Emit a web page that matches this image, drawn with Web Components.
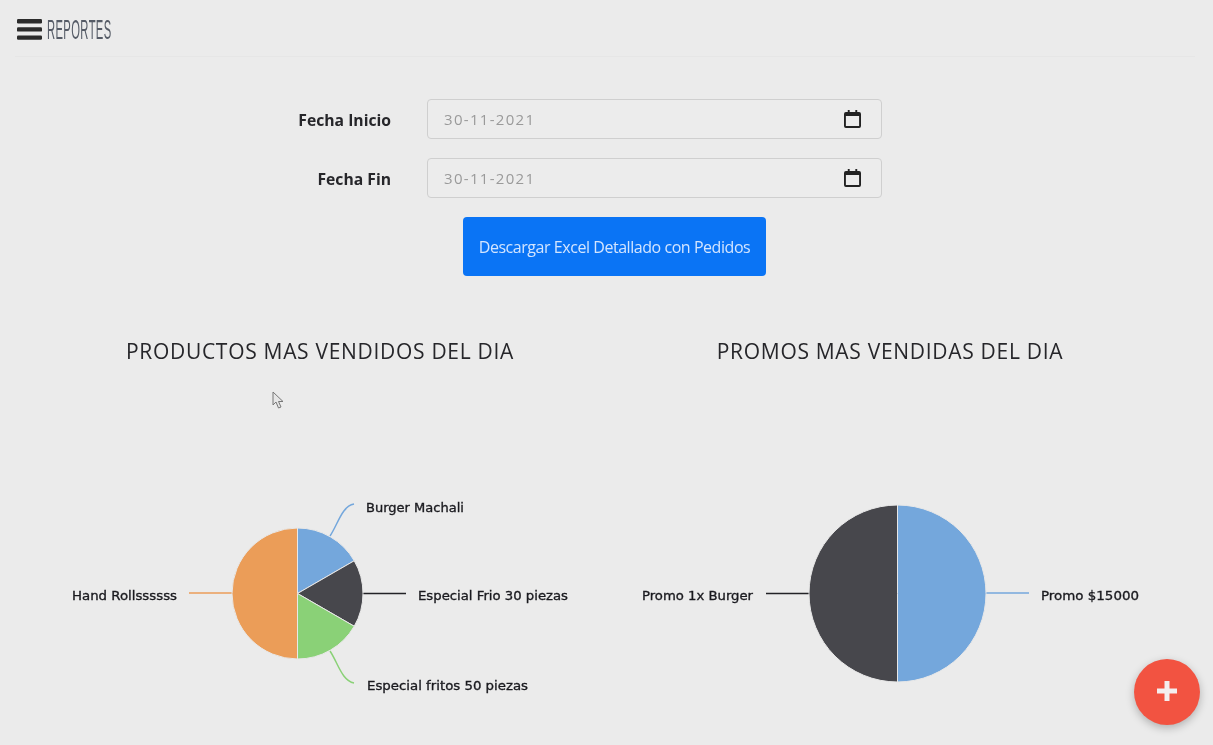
<!DOCTYPE html>
<html>
<head>
<meta charset="utf-8">
<title>Reportes</title>
<style>
  html, body { margin: 0; height: 100%; background: #ebebeb; overflow: hidden; }
  body { font-family: "Open Sans", "Liberation Sans", sans-serif; color: #212529; filter: blur(.4px); }
</style>
</head>
<body>
<app-header>Reportes</app-header>
<report-form>
  <date-field label="Fecha Inicio" value="30-11-2021"></date-field>
  <date-field label="Fecha Fin" value="30-11-2021"></date-field>
  <primary-button>Descargar Excel Detallado con Pedidos</primary-button>
</report-form>
<chart-row>
  <pie-chart title="PRODUCTOS MAS VENDIDOS DEL DIA" x="35" cx="297.5" r="65.5"
    slices='[{"c":"#74a7dc","a":60},{"c":"#47474c","a":60},{"c":"#8ad177","a":60},{"c":"#eb9d58","a":180}]'
    lines='[{"d":"M330 536C338 524 342 506 354 504","c":"#74a7dc"},{"d":"M363 593.5H406","c":"#222226"},{"d":"M330 651C338 663 342 681 354 683","c":"#8ad177"},{"d":"M189 593H232","c":"#eb9d58"}]'
    labels='[{"t":"Burger Machali","x":366,"y":512,"w":98},{"t":"Especial Frio 30 piezas","x":418,"y":600,"w":150},{"t":"Especial fritos 50 piezas","x":367,"y":690,"w":161},{"t":"Hand Rollssssss","x":72,"y":600,"w":105}]'></pie-chart>
  <pie-chart title="PROMOS MAS VENDIDAS DEL DIA" x="605" cx="897.5" r="88.5"
    slices='[{"c":"#74a7dc","a":180},{"c":"#47474c","a":180}]'
    lines='[{"d":"M986 593H1029","c":"#74a7dc"},{"d":"M766 593.5H809","c":"#222226"}]'
    labels='[{"t":"Promo $15000","x":1041,"y":600,"w":98},{"t":"Promo 1x Burger","x":642,"y":600,"w":111}]'></pie-chart>
</chart-row>
<mouse-pointer></mouse-pointer>
<fab-button></fab-button>

<script>
class AppHeader extends HTMLElement {
  constructor () {
    super()
    this.attachShadow({ mode: 'open' }).innerHTML = `
      <style>
        :host { display: block; margin: 0 18px 0 15px; height: 56px; border-bottom: 1px solid #e6e6e6; box-sizing: content-box; }
        .bar { display: flex; align-items: center; gap: 5px; height: 100%; padding: 3px 0 0 2px; box-sizing: border-box; }
        svg { display: block; width: 25px; height: 21px; flex: none; }
        .name {
          font: 400 28px "Liberation Sans", sans-serif; text-transform: uppercase; color: #555b66;
          display: inline-block; transform: scaleX(.4); transform-origin: left center; white-space: nowrap; letter-spacing: 1px;
        }
      </style>
      <div class="bar">
        <svg viewBox="0 0 25 21"><g fill="#2b2b2b"><rect width="25" height="4.4" rx="1.2"/><rect y="8.2" width="25" height="4.4" rx="1.2"/><rect y="16.4" width="25" height="4.4" rx="1.2"/></g></svg>
        <span class="name"><slot></slot></span>
      </div>`
  }
}
customElements.define('app-header', AppHeader)

class ReportForm extends HTMLElement {
  constructor () {
    super()
    this.attachShadow({ mode: 'open' }).innerHTML = `
      <style>
        :host { display: flex; flex-direction: column; gap: 19px; padding-top: 42px; }
      </style>
      <slot></slot>`
  }
}
customElements.define('report-form', ReportForm)

class DateField extends HTMLElement {
  constructor () {
    super()
    this.attachShadow({ mode: 'open' }).innerHTML = `
      <style>
        :host { display: grid; grid-template-columns: 391px 455px; column-gap: 36px; align-items: center; }
        label { text-align: right; font: 700 15.7px "Open Sans", sans-serif; color: #26262a; padding-top: 2px; }
        .box {
          display: flex; align-items: center; justify-content: space-between; height: 40px; box-sizing: border-box;
          padding: 0 20px 0 16px; border: 1px solid #cfcfcf; border-radius: 4px; background: #ececec;
          font: 400 15px "Open Sans", sans-serif; color: #9a9a9a; letter-spacing: 1.3px;
        }
        svg { display: block; width: 17px; height: 18px; }
      </style>
      <label></label>
      <div class="box"><span class="val"></span>
        <svg viewBox="0 0 18 18" preserveAspectRatio="none"><path fill="#222" d="M4 0h2v2h6V0h2v2h2a2 2 0 0 1 2 2v12a2 2 0 0 1-2 2H2a2 2 0 0 1-2-2V4a2 2 0 0 1 2-2h2V0zM2 6v10h14V6H2z"/></svg>
      </div>`
  }

  connectedCallback () {
    this.shadowRoot.querySelector('label').textContent = this.getAttribute('label')
    this.shadowRoot.querySelector('.val').textContent = this.getAttribute('value')
  }
}
customElements.define('date-field', DateField)

class PrimaryButton extends HTMLElement {
  constructor () {
    super()
    this.attachShadow({ mode: 'open' }).innerHTML = `
      <style>
        :host {
          display: flex; align-items: center; justify-content: center; align-self: flex-start;
          margin-left: 463px; width: 303px; height: 59px; box-sizing: border-box; border-radius: 4px;
          background: #0a74f5; color: #d3e5ff; font: 400 16px "Open Sans", sans-serif; letter-spacing: -.45px; white-space: nowrap;
        }
      </style>
      <slot></slot>`
  }
}
customElements.define('primary-button', PrimaryButton)

class ChartRow extends HTMLElement {
  constructor () {
    super()
    this.attachShadow({ mode: 'open' }).innerHTML = `
      <style>
        :host { display: grid; grid-template-columns: 570px 570px; padding: 60px 0 0 35px; }
      </style>
      <slot></slot>`
  }
}
customElements.define('chart-row', ChartRow)

class PieChart extends HTMLElement {
  connectedCallback () {
    var x = +this.getAttribute('x')
    var cx = +this.getAttribute('cx')
    var cy = 593.5
    var r = +this.getAttribute('r')
    var slices = JSON.parse(this.getAttribute('slices'))
    var lines = JSON.parse(this.getAttribute('lines'))
    var labels = JSON.parse(this.getAttribute('labels'))
    var start = 0
    var paths = slices.map(function (s) {
      var a0 = start * Math.PI / 180
      var a1 = (start + s.a) * Math.PI / 180
      start += s.a
      var p = 'M' + cx + ' ' + cy + 'L' + (cx + r * Math.sin(a0)) + ' ' + (cy - r * Math.cos(a0)) +
        'A' + r + ' ' + r + ' 0 ' + (s.a > 180 ? 1 : 0) + ' 1 ' + (cx + r * Math.sin(a1)) + ' ' + (cy - r * Math.cos(a1)) + 'Z'
      return '<path d="' + p + '" fill="' + s.c + '" stroke="#e8e8e8" stroke-width="1"/>'
    }).join('')
    var leaders = lines.map(function (l) {
      return '<path d="' + l.d + '" fill="none" stroke="' + l.c + '" stroke-width="1.5"/>'
    }).join('')
    var texts = labels.map(function (l) {
      return '<text x="' + l.x + '" y="' + l.y + '" textLength="' + l.w + '" lengthAdjust="spacingAndGlyphs">' + l.t + '</text>'
    }).join('')
    this.attachShadow({ mode: 'open' }).innerHTML = `
      <style>
        :host { display: block; }
        h2 { margin: 0; height: 30px; text-align: center; font: 400 21px/30px "Open Sans", sans-serif; letter-spacing: .7px; color: #26262a; white-space: nowrap; }
        svg { display: block; width: 570px; height: 330px; }
        text { font: 400 13px "DejaVu Sans", sans-serif; fill: #1a1a1f; stroke: #1a1a1f; stroke-width: .35px; }
      </style>
      <h2>${this.getAttribute('title')}</h2>
      <svg viewBox="${x} 366 570 330">${leaders}${paths}${texts}</svg>`
  }
}
customElements.define('pie-chart', PieChart)

class MousePointer extends HTMLElement {
  constructor () {
    super()
    this.attachShadow({ mode: 'open' }).innerHTML = `
      <style>
        :host { position: absolute; left: 272px; top: 391px; width: 13px; height: 19px; }
        svg { display: block; }
      </style>
      <svg width="13" height="19" viewBox="0 0 13 19"><path d="M1 1v13l3-3 2.500 6 2.500-1-2.500-5.500H11z" fill="#e6e6e6" stroke="#777" stroke-width="1"/></svg>`
  }
}
customElements.define('mouse-pointer', MousePointer)

class FabButton extends HTMLElement {
  constructor () {
    super()
    this.attachShadow({ mode: 'open' }).innerHTML = `
      <style>
        :host {
          position: fixed; left: 1134px; top: 659px; width: 66px; height: 66px; border-radius: 50%;
          background: #f25341; box-shadow: 0 3px 8px rgba(0,0,0,.25);
          display: flex; align-items: center; justify-content: center;
        }
        svg { display: block; margin-top: -2px; }
      </style>
      <svg width="22" height="22" viewBox="0 0 22 22"><path fill="#f4eeee" d="M8.500 1h5v7.500H21v5h-7.500V21h-5v-7.500H1v-5h7.500z"/></svg>`
  }
}
customElements.define('fab-button', FabButton)
</script>
</body>
</html>
